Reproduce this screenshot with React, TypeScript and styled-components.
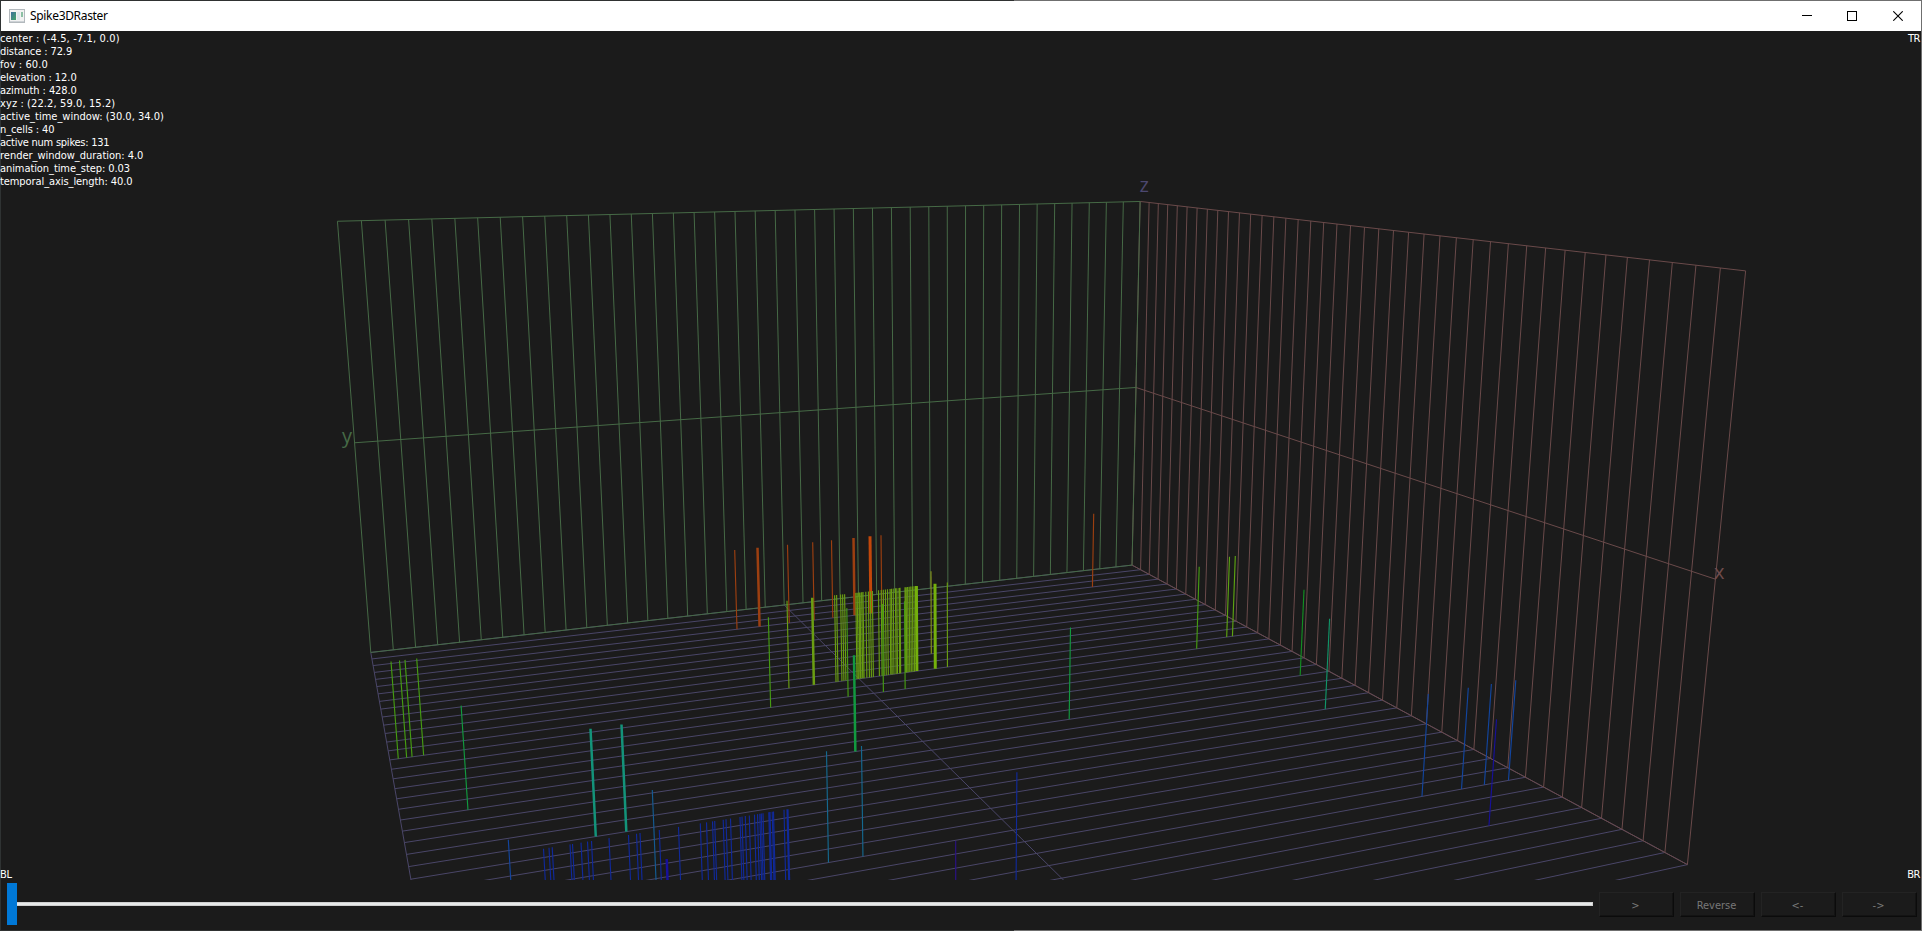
import React from "react";
import styled, { createGlobalStyle } from "styled-components";

const uiFont = `"DejaVu Sans Condensed", "DejaVu Sans", sans-serif`;

const GlobalStyle = createGlobalStyle`
  * { box-sizing: border-box; }
  html, body { margin: 0; padding: 0; background: #1b1b1b; overflow: hidden; }
`;

/* ---------- camera ---------- */

type Vec = [number, number, number];

const VIEW_W = 1920;
const VIEW_H = 849;
const MID_X = VIEW_W / 2 - 0.7;
const MID_Y = VIEW_H / 2;
const CENTER: Vec = [-4.5, -7.1, 0];
const DISTANCE = 72.9;
const rad = (deg: number) => (deg * Math.PI) / 180;
const EL = rad(12);
const AZ = rad(428);
const FOCAL = VIEW_W / 2 / Math.tan(rad(60) / 2);

const EYE: Vec = [
  CENTER[0] + DISTANCE * Math.cos(EL) * Math.cos(AZ),
  CENTER[1] + DISTANCE * Math.cos(EL) * Math.sin(AZ),
  CENTER[2] + DISTANCE * Math.sin(EL),
];
const FORWARD: Vec = [
  -Math.cos(EL) * Math.cos(AZ),
  -Math.cos(EL) * Math.sin(AZ),
  -Math.sin(EL),
];
const RIGHT: Vec = [-Math.sin(AZ), Math.cos(AZ), 0];
const UP: Vec = [
  -Math.sin(EL) * Math.cos(AZ),
  -Math.sin(EL) * Math.sin(AZ),
  Math.cos(EL),
];

const dot = (a: Vec, b: Vec) => a[0] * b[0] + a[1] * b[1] + a[2] * b[2];

function project(p: Vec): [number, number] {
  const d: Vec = [p[0] - EYE[0], p[1] - EYE[1], p[2] - EYE[2]];
  const depth = dot(d, FORWARD);
  return [
    MID_X + (FOCAL * dot(d, RIGHT)) / depth,
    MID_Y - (FOCAL * dot(d, UP)) / depth,
  ];
}

/* World x of the point on the line (y, z) that is seen in a given view column. */
function worldX(column: number, y: number, z: number): number {
  const u = (column - MID_X) / FOCAL;
  const n: Vec = [
    RIGHT[0] - u * FORWARD[0],
    RIGHT[1] - u * FORWARD[1],
    RIGHT[2] - u * FORWARD[2],
  ];
  return EYE[0] - (n[1] * (y - EYE[1]) + n[2] * (z - EYE[2])) / n[0];
}

function segment(a: Vec, b: Vec): string {
  const [x1, y1] = project(a);
  const [x2, y2] = project(b);
  return `M${x1.toFixed(2)} ${y1.toFixed(2)}L${x2.toFixed(2)} ${y2.toFixed(2)}`;
}

/* ---------- grids ---------- */

const HALF = 20;
const DEPTH = 10;
const steps = Array.from({ length: 41 }, (_, i) => i - HALF);

const xWall = [
  ...steps.map((y) => segment([-HALF, y, -DEPTH], [-HALF, y, DEPTH])),
  ...[-DEPTH, 0, DEPTH].map((z) => segment([-HALF, -HALF, z], [-HALF, HALF, z])),
].join("");

const yWall = [
  ...steps.map((x) => segment([x, -HALF, -DEPTH], [x, -HALF, DEPTH])),
  ...[-DEPTH, 0, DEPTH].map((z) => segment([-HALF, -HALF, z], [HALF, -HALF, z])),
].join("");

const floor = [
  ...steps.map((y) => segment([-HALF, y, -DEPTH], [HALF, y, -DEPTH])),
  ...[-HALF, 0, HALF].map((x) => segment([x, -HALF, -DEPTH], [x, HALF, -DEPTH])),
].join("");

/* ---------- spikes ---------- */

interface Cell {
  row: number;
  color: string;
  thin: number[];
  wide?: number[];
  bright?: number[];
  brightColor?: string;
}

const SPIKE_TOP = -6;

const cells: Cell[] = [
  {
    row: -17,
    color: "#9c3f10",
    thin: [733.7, 786.5, 811.7, 830.5, 880, 1092.7],
    wide: [756.5, 852.5],
    bright: [869],
    brightColor: "#c2470a",
  },
  { row: -10, color: "#84921a", thin: [930] },
  {
    row: -8,
    color: "#6a9e12",
    thin: [
      786, 833.6, 835.6, 839.6, 841.6, 843.6, 854.8, 856.2, 857.8, 859, 860.6, 862, 864.8, 867.4,
      869.4, 871.4, 877.5, 880.2, 882.3, 884.4, 886.5, 889, 890.4, 892.2, 894.4, 895.8, 898, 899,
      904, 905.2, 906.6, 908.2, 909.8, 911.4, 913, 946.3,
    ],
    wide: [811.2],
    bright: [915.4, 934],
    brightColor: "#74b00c",
  },
  { row: -7, color: "#5da312", thin: [1228.5, 1234.3] },
  {
    row: -6,
    color: "#459c12",
    thin: [390, 398.5, 404, 415.7, 767.4, 845.8, 881.5, 903.5, 1198.2],
  },
  { row: -1, color: "#128f22", thin: [1303] },
  { row: 0, color: "#12993f", thin: [460.1, 1069.5], wide: [853] },
  { row: 3, color: "#119468", thin: [1328.6] },
  { row: 4, color: "#13937a", thin: [], wide: [589.5, 620.5] },
  { row: 9, color: "#14688f", thin: [825.5, 860.5] },
  { row: 10, color: "#145b92", thin: [651.3] },
  { row: 12, color: "#12459e", thin: [507.3, 1427.3, 1467.3, 1490.4, 1514.8] },
  {
    row: 13,
    color: "#10299a",
    thin: [
      542.5, 548, 551.2, 569, 571.5, 580, 586.5, 590.5, 608, 627.5, 635.5, 639, 658.3, 677.5,
      699.3, 705.5, 711.5, 713.7, 722.2, 725, 729.5, 739, 741, 744.3, 748.3, 753.5, 756.5, 758.8,
      760.3, 762, 767.8, 769, 771.2, 772.5, 783, 786, 787, 1015.9,
    ],
  },
  { row: 15, color: "#17109a", thin: [1495.5], wide: [665.7] },
  { row: 17, color: "#2b1285", thin: [954.7] },
];

const spikePath = (row: number, columns: number[]) =>
  columns
    .map((c) => {
      const x = worldX(c, row, SPIKE_TOP);
      return segment([x, row, -DEPTH], [x, row, SPIKE_TOP]);
    })
    .join("");

/* ---------- layout ---------- */

const Window = styled.div`
  position: relative;
  width: 1922px;
  height: 931px;
  display: flex;
  flex-direction: column;
  background: #1b1b1b;
  border: 1px solid;
  border-color: #2f3131 #6f6f6f #2f3131 #2f3333;
  color: #fff;
  font: 11px/13px ${uiFont};
`;

const HighlightEdge = styled.div<{ $side: "top" | "bottom" }>`
  position: absolute;
  ${(p) => p.$side}: -1px;
  left: 1013px;
  right: -1px;
  height: 1px;
  background: #6f6f6f;
`;

const TitleBar = styled.header`
  flex: 0 0 30px;
  display: flex;
  align-items: center;
  padding-left: 8px;
  background: #fff;
  color: #000;
`;

const Title = styled.h1`
  margin: 0 auto 0 5px;
  font: 400 12px/16px "Noto Sans", "Open Sans", sans-serif;
  letter-spacing: -0.32px;
`;

const CaptionButton = styled.button<{ $width?: number }>`
  width: ${(p) => p.$width ?? 46}px;
  height: 30px;
  padding: 0;
  border: 0;
  background: none;
  display: grid;
  place-items: center;
`;

const Viewport = styled.main`
  position: relative;
  flex: 0 0 ${VIEW_H}px;
`;

const Scene = styled.svg`
  display: block;
  overflow: hidden;
`;

const AxisName = styled.text`
  font: 20px "Open Sans", "Noto Sans", sans-serif;
`;

const Readout = styled.ul`
  position: absolute;
  top: 1px;
  left: -1px;
  margin: 0;
  padding: 0;
  list-style: none;
  white-space: pre;
`;

const ReadoutLine = styled.li<{ $track: number }>`
  height: 13px;
  letter-spacing: ${(p) => p.$track}px;
`;

const Corner = styled.span<{ $v: "top" | "bottom"; $h: "left" | "right" }>`
  position: absolute;
  ${(p) => (p.$v === "top" ? "top: 1px" : "bottom: -1px")};
  ${(p) => (p.$h === "left" ? "left: -1px" : "right: 1px")};
  letter-spacing: -0.4px;
`;

const Controls = styled.footer`
  flex: 1;
  display: flex;
  align-items: center;
  gap: 6px;
  padding: 0 4px 0 6px;
`;

const Slider = styled.div`
  flex: 1;
  display: flex;
  align-items: center;
  height: 42px;
  margin-top: -2px;
`;

const Handle = styled.div`
  width: 10px;
  height: 42px;
  background: #0078d7;
`;

const Groove = styled.div`
  flex: 1;
  height: 4px;
  background: #e7eaea;
  border: 1px solid #d0d0d0;
  border-left: 0;
`;

const PushButton = styled.button`
  width: 75px;
  height: 25px;
  margin-top: -1px;
  padding: 1px 2px 0 0;
  background: #1b1b1b;
  border: 1px solid;
  border-color: #232323 #0b0b0b #0b0b0b #232323;
  box-shadow: inset -1px -1px 0 #131313;
  color: #787878;
  font: 11px/13px ${uiFont};
`;

const readout: [string, number][] = [
  ["center : (-4.5, -7.1, 0.0)", 0.14],
  ["distance : 72.9", -0.1],
  ["fov : 60.0", 0.08],
  ["elevation : 12.0", -0.05],
  ["azimuth : 428.0", -0.08],
  ["xyz : (22.2, 59.0, 15.2)", 0.1],
  ["active_time_window: (30.0, 34.0)", 0],
  ["n_cells : 40", -0.1],
  ["active num spikes: 131", -0.24],
  ["render_window_duration: 4.0", -0.02],
  ["animation_time_step: 0.03", -0.08],
  ["temporal_axis_length: 40.0", -0.08],
];

function AppIcon() {
  return (
    <svg width="16" height="14" viewBox="0 0 16 14">
      <defs>
        <linearGradient id="pane" x1="0" y1="0" x2="1" y2="1">
          <stop offset="0" stopColor="#3d6f9c" />
          <stop offset="1" stopColor="#46a568" />
        </linearGradient>
      </defs>
      <rect x="0.5" y="0.5" width="15" height="13" fill="#f2f2f2" stroke="#b3b9bd" />
      <rect x="2" y="3" width="5" height="8" fill="url(#pane)" />
      <rect x="8" y="3" width="3" height="8" fill="#dfe6ea" />
      <rect x="12" y="3" width="2" height="5" fill="#8cc0a4" />
      <path d="M1 12.5H15" stroke="#cdd2d6" />
    </svg>
  );
}

export default function App() {
  return (
    <Window>
      <GlobalStyle />
      <TitleBar>
        <AppIcon />
        <Title>Spike3DRaster</Title>
        <CaptionButton $width={44} aria-label="Minimize">
          <svg width="10" height="10" shapeRendering="crispEdges">
            <path d="M0 4.5H10" stroke="#000" />
          </svg>
        </CaptionButton>
        <CaptionButton aria-label="Maximize">
          <svg width="10" height="10" shapeRendering="crispEdges">
            <rect x="0.5" y="0.5" width="9" height="9" fill="none" stroke="#000" />
          </svg>
        </CaptionButton>
        <CaptionButton aria-label="Close">
          <svg width="10" height="10">
            <path d="M0.3 0.3L9.7 9.7M9.7 0.3L0.3 9.7" stroke="#000" strokeWidth="1.1" />
          </svg>
        </CaptionButton>
      </TitleBar>

      <Viewport>
        <Scene width={VIEW_W} height={VIEW_H} viewBox={`0 0 ${VIEW_W} ${VIEW_H}`} fill="none">
          <path d={floor} stroke="#4a4668" />
          <path d={xWall} stroke="#6a4a4a" />
          <path d={yWall} stroke="#466a46" />
          {cells.map((cell) => (
            <g key={cell.row} stroke={cell.color}>
              <path d={spikePath(cell.row, cell.thin)} strokeWidth={1.15} />
              {cell.wide && <path d={spikePath(cell.row, cell.wide)} strokeWidth={2.5} />}
              {cell.bright && (
                <path
                  d={spikePath(cell.row, cell.bright)}
                  stroke={cell.brightColor}
                  strokeWidth={3}
                />
              )}
            </g>
          ))}
          <AxisName x="1138.5" y="161" fill="#4c4870">
            z
          </AxisName>
          <AxisName x="341" y="412" fill="#466a46">
            y
          </AxisName>
          <AxisName x="1713" y="548" fill="#6f4c4c">
            x
          </AxisName>
        </Scene>
        <Readout>
          {readout.map(([text, track]) => (
            <ReadoutLine key={text} $track={track}>
              {text}
            </ReadoutLine>
          ))}
        </Readout>
        <Corner $v="top" $h="right">TR</Corner>
        <Corner $v="bottom" $h="left">BL</Corner>
        <Corner $v="bottom" $h="right">BR</Corner>
      </Viewport>

      <Controls>
        <Slider>
          <Handle />
          <Groove />
        </Slider>
        <PushButton>&gt;</PushButton>
        <PushButton>Reverse</PushButton>
        <PushButton>&lt;-</PushButton>
        <PushButton>-&gt;</PushButton>
      </Controls>
      <HighlightEdge $side="top" />
      <HighlightEdge $side="bottom" />
    </Window>
  );
}
